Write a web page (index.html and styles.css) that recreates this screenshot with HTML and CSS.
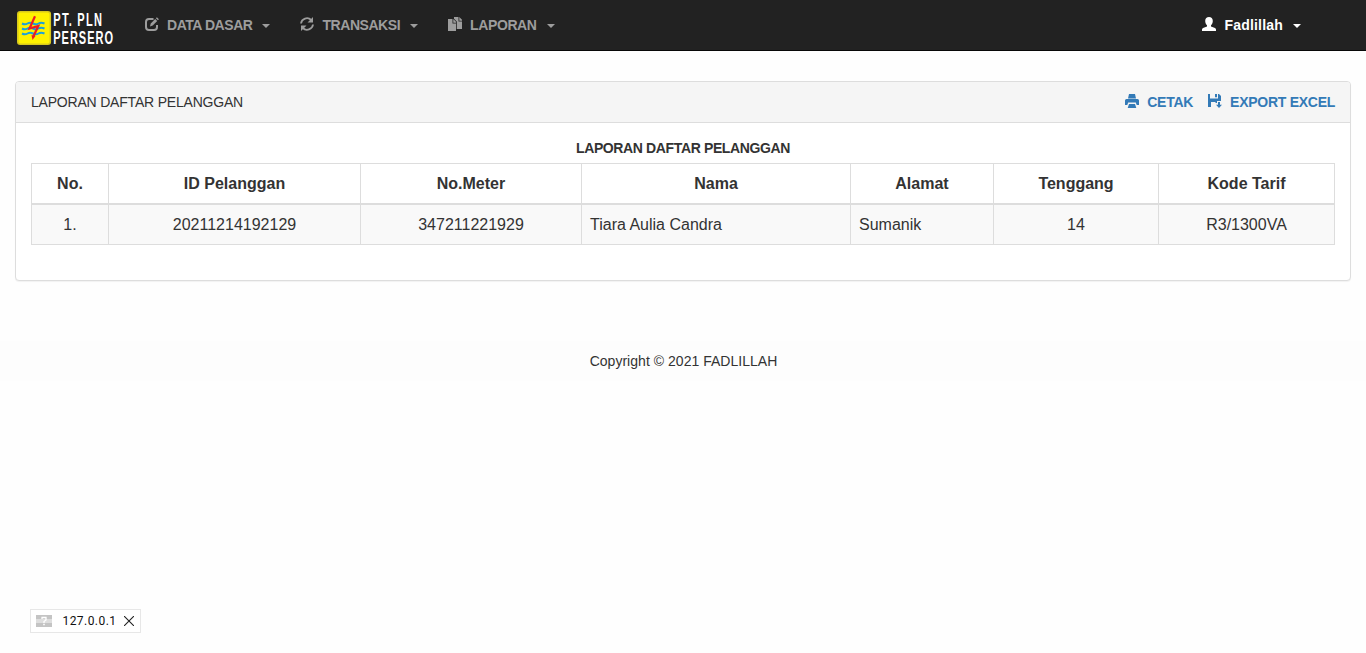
FILE: index.html
```html
<!DOCTYPE html>
<html lang="id">
<head>
<meta charset="utf-8">
<title>Laporan Daftar Pelanggan</title>
<link rel="stylesheet" href="styles.css">
</head>
<body>
<nav class="navbar">
  <a class="brand">
    <svg width="102" height="42" viewBox="0 -4 102 42">
      <rect x=".8" y=".8" width="32.500" height="32.500" rx="2.500" fill="#fff200" stroke="#d9c91c" stroke-width="1.600"/>
      <g fill="none" stroke="#1ba0dc" stroke-width="2">
        <path d="M5 12.500q3 1.500 5.500 0t5.500 0t5.500 0t6 0"/>
        <path d="M5 17.500q3 1.500 5.500 0t5.500 0t5.500 0t6 0"/>
        <path d="M5 22.500q3 1.500 5.500 0t5.500 0t5.500 0t6 0"/>
      </g>
      <path d="M18 5.200L12.500 17.500L21.300 15L16.600 25" fill="none" stroke="#ed1c24" stroke-width="2.200"/>
      <path d="M14.500 24l4 1-3 4z" fill="#ed1c24"/>
      <g transform="scale(.58 1)">
        <text class="brand-text" x="62.500" y="15.300" textLength="84" lengthAdjust="spacing">PT. PLN</text>
        <text class="brand-text" x="62.500" y="33" textLength="103" lengthAdjust="spacing">PERSERO</text>
      </g>
    </svg>
  </a>
  <ul class="menu">
    <li class="menu-item">
      <svg class="icon" viewBox="0 0 14 14"><path d="M8.500 2H4Q1 2 1 5v5q0 3 3 3h5q3 0 3-3V8" fill="none" stroke="currentColor" stroke-width="2"/><path d="M5 9.500l.7-3L10.200 2l2 2-4.500 4.600zM10.900 1.300l1-1 2 2-1 1z" fill="currentColor"/></svg>
      <span class="label">DATA DASAR</span><span class="caret"></span>
    </li>
    <li class="menu-item">
      <svg class="icon" viewBox="0 0 14 14"><path d="M1 6.500A6 6 0 0 1 11.200 3M13 7.500A6 6 0 0 1 2.800 11" fill="none" stroke="currentColor" stroke-width="1.800"/><path d="M13 0v5.500H7.500zM1 14V8.500h5.500z" fill="currentColor"/></svg>
      <span class="label">TRANSAKSI</span><span class="caret"></span>
    </li>
    <li class="menu-item">
      <svg class="icon" viewBox="0 0 14 14"><path d="M0 2h4.500v4.500H8V14H0zM5.300 2L8 4.800V5.700H5.300zM6 0h4.500v4.500H14V12H8.800V4.500L6 1.700zM11.300 0L14 2.800v.9h-2.700z" fill="currentColor"/></svg>
      <span class="label laporan">LAPORAN</span><span class="caret"></span>
    </li>
  </ul>
  <div class="menu-item user">
    <svg class="icon" viewBox="0 0 14 14"><path d="M7 0c2.300 0 3.800 1.500 3.800 4 0 1.800-.8 3.300-1.800 4.200v1.300l4 1.500q1 .5 1 1.500V14H0v-1.500q0-1 1-1.500l4-1.500V8.200C4 7.300 3.200 5.800 3.200 4 3.200 1.500 4.700 0 7 0z" fill="currentColor"/></svg>
    <span class="label">Fadlillah</span><span class="caret"></span>
  </div>
</nav>
<main class="panel">
  <header class="panel-heading">
    <span class="heading-text">LAPORAN DAFTAR PELANGGAN</span>
    <div class="actions">
      <a class="action"><svg class="icon" viewBox="0 0 14 14"><path d="M4 0h6l1 4.500H3zM1.500 5h11q1.500 0 1.500 1.500V11h-2.300l-.9-2.500H3.200L2.300 11H0V6.500Q0 5 1.500 5zM4 10h6l1.300 4H2.700z" fill="currentColor"/></svg>CETAK</a>
      <a class="action"><svg class="icon" viewBox="0 0 14 14"><path d="M0 0h2v4.500h8V0h1l2 2v5H9v2H7.500v-1H3v5H0zM7 0h2v3.300H7zM10 8h2v2.800h2L11 14l-3-3.200h2z" fill="currentColor"/></svg>EXPORT EXCEL</a>
    </div>
  </header>
  <div class="panel-body">
    <h1 class="title">LAPORAN DAFTAR PELANGGAN</h1>
    <table class="report">
      <colgroup><col class="c-no"><col class="c-id"><col class="c-meter"><col class="c-nama"><col class="c-alamat"><col class="c-tenggang"><col class="c-tarif"></colgroup>
      <thead><tr><th>No.</th><th>ID Pelanggan</th><th>No.Meter</th><th>Nama</th><th>Alamat</th><th>Tenggang</th><th>Kode Tarif</th></tr></thead>
      <tbody><tr><td>1.</td><td>20211214192129</td><td>347211221929</td><td class="left">Tiara Aulia Candra</td><td class="left">Sumanik</td><td>14</td><td>R3/1300VA</td></tr></tbody>
    </table>
  </div>
</main>
<footer class="footer">Copyright © 2021 FADLILLAH</footer>
<div class="host">
  <svg width="16" height="12" viewBox="0 0 16 12"><path d="M0 0h16v12H0z" fill="#c4c4c4"/><path d="M0 4h16v4H0z" fill="#dedede"/><path d="M6 4V2.500h4V5L8 6.500V8M7.200 9.500h1.600" fill="none" stroke="#fff" stroke-width="1.300"/></svg>
  <span class="address">127.0.0.1</span>
  <svg width="10" height="10" viewBox="0 0 10 10"><path d="M0 0l10 10M10 0L0 10" stroke="#222" stroke-width="1.100"/></svg>
</div>
</body>
</html>
```

FILE: styles.css
```css
* { box-sizing: border-box; }
body {
  margin: 0;
  min-height: 653px;
  display: flex;
  flex-direction: column;
  background: #fefefe;
  color: #333;
  font: 14px/20px "Liberation Sans", Arial, sans-serif;
}
.navbar {
  height: 51px;
  display: flex;
  align-items: flex-start;
  background: #222;
  border-bottom: 1px solid #080808;
  color: #9d9d9d;
  font-weight: bold;
}
.brand { width: 130px; padding: 7px 0 0 17px; }
.brand svg { display: block; overflow: visible; }
.brand-text {
  font: bold 19px "Liberation Sans", Arial, sans-serif;
  fill: #fff;
}
.menu { display: flex; margin: 0; padding: 0; list-style: none; }
.menu-item { display: flex; align-items: center; padding: 15px; }
.menu .label { letter-spacing: -.45px; }
.menu .laporan { letter-spacing: -.4px; }
.user { margin-left: auto; margin-right: 50px; color: #fff; }
.user .label { letter-spacing: .2px; }
.icon { width: 14px; height: 14px; margin: 0 8px 2px 0; flex: none; }
.caret {
  margin-left: 10px;
  margin-top: 2px;
  border: 4px solid transparent;
  border-top-color: currentColor;
  border-bottom: 0;
}
.panel {
  height: 200px;
  margin: 30px 15px 0;
  background: #fff;
  border: 1px solid #ddd;
  border-radius: 4px;
  box-shadow: 0 1px 1px rgba(0, 0, 0, .05);
}
.panel-heading {
  display: flex;
  justify-content: space-between;
  padding: 10px 15px;
  background: #f5f5f5;
  border-bottom: 1px solid #ddd;
  border-radius: 3px 3px 0 0;
}
.heading-text { letter-spacing: -.2px; }
.actions { display: flex; gap: 15px; color: #337ab7; font-weight: bold; letter-spacing: -.27px; }
.action { display: flex; align-items: center; }
.panel-body { padding: 15px; }
.title { margin: 0 0 5px; font-size: 14px; line-height: 20px; text-align: center; letter-spacing: -.37px; }
.report {
  width: 1304px;
  table-layout: fixed;
  border-collapse: collapse;
  font-size: 16px;
  line-height: 23px;
}
.report th, .report td { border: 1px solid #ddd; padding: 8px; text-align: center; }
.report th { border-bottom-width: 2px; }
.report td { background: #f9f9f9; }
.report .left { text-align: left; }
.c-no { width: 77px; }
.c-id { width: 252px; }
.c-meter { width: 221px; }
.c-nama { width: 269px; }
.c-alamat { width: 143px; }
.c-tenggang { width: 165px; }
.c-tarif { width: 176px; }
.footer { margin-top: 60px; padding: 10px 10px 10px 11px; background: #fdfdfd; text-align: center; letter-spacing: .03px; }
.host {
  width: 111px;
  height: 24px;
  margin: auto 0 20px 30px;
  padding: 0 6px 0 5px;
  display: flex;
  align-items: center;
  justify-content: space-between;
  background: #fff;
  border: 1px solid #e7e7e7;
  color: #111;
  font: 12px/22px Roboto, sans-serif;
}
.address { margin-left: 3px; letter-spacing: .45px; }
```
